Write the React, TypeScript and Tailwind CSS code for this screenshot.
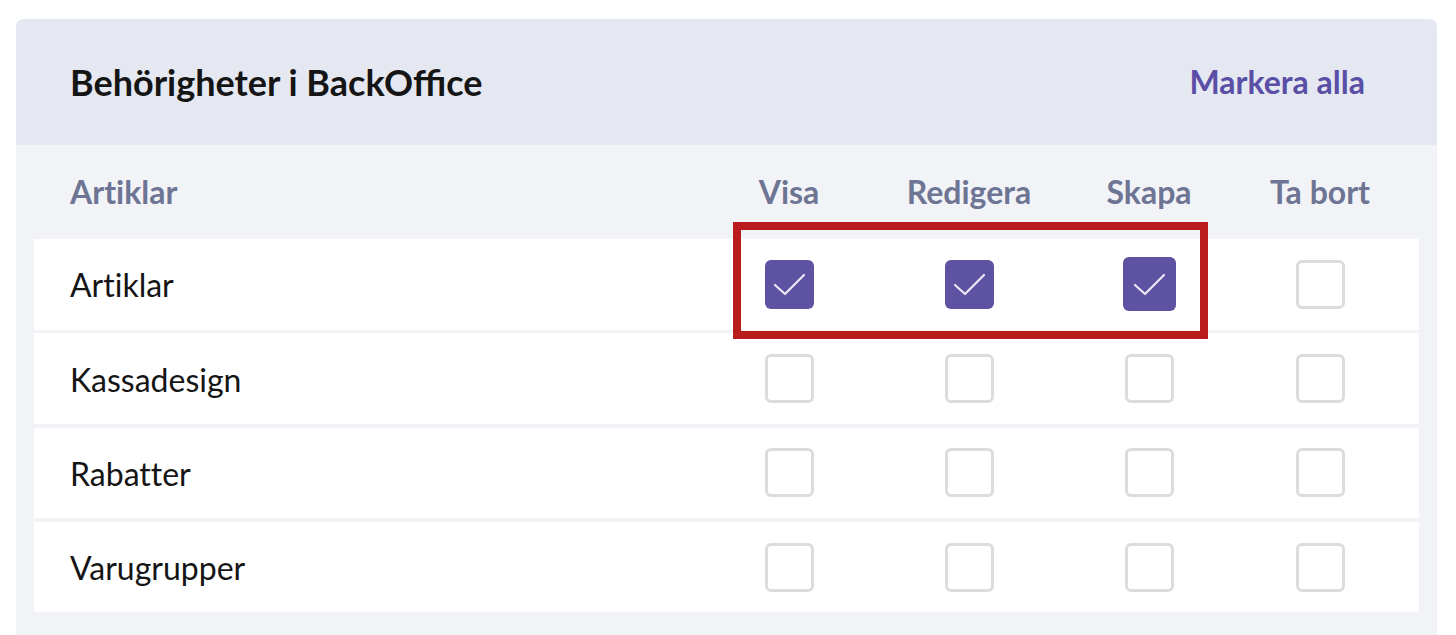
import React from "react";

const rows = [
  { name: "Artiklar", checks: [true, true, true, false] },
  { name: "Kassadesign", checks: [false, false, false, false] },
  { name: "Rabatter", checks: [false, false, false, false] },
  { name: "Varugrupper", checks: [false, false, false, false] },
];

const cols = ["Visa", "Redigera", "Skapa", "Ta bort"];

function Box({ checked, big }: { checked: boolean; big?: boolean }) {
  if (checked) {
    return (
      <div
        className={`${big ? "w-[53px] h-[54px]" : "w-[49px] h-[49px]"} rounded-[6px] bg-[#5e52a3] flex items-center justify-center`}
      >
        <svg width="48" height="48" viewBox="0 0 48 48" fill="none">
          <polyline
            points="10,25 20,34 39,15"
            stroke="#ece9f7"
            strokeWidth="2.2"
            strokeLinecap="round"
            strokeLinejoin="round"
          />
        </svg>
      </div>
    );
  }
  return <div className="w-[49px] h-[49px] rounded-[6px] border-[3px] border-[#dcdcdc] bg-white" />;
}

export default function App() {
  return (
    <div className="w-[1456px] h-[635px] bg-white pt-[19px] pl-[16px] overflow-hidden font-['Lato',sans-serif]">
      <div className="w-[1421px] rounded-t-[7px] overflow-hidden">
        {/* header */}
        <div className="h-[126px] bg-[#e5e8f1] flex items-center justify-between pl-[54px] pr-[72px]">
          <div className="text-[36px] font-bold text-[#151515]">Behörigheter i BackOffice</div>
          <div className="text-[32px] font-bold text-[#5a4ea6]">Markera alla</div>
        </div>

        {/* body */}
        <div className="bg-[#f2f3f7] px-[18px] pb-[30px] [font-variant-ligatures:none]">
          <div className="h-[94px] grid grid-cols-[1fr_180px_180px_180px_162px] items-center pl-[36px] pr-[18px] pb-[1px]">
            <div className="text-[32px] font-bold text-[#6e7594]">Artiklar</div>
            {cols.map((c) => (
              <div key={c} className="text-[32px] font-bold text-[#6e7594] text-center">
                {c}
              </div>
            ))}
          </div>

          <div className="relative flex flex-col gap-[3.8px]">
            {rows.map((r) => (
              <div
                key={r.name}
                className="h-[90.5px] bg-white grid grid-cols-[1fr_180px_180px_180px_162px] items-center pl-[36px] pr-[18px]"
              >
                <div className="text-[32px] text-[#151515] pt-[2px]">{r.name}</div>
                {r.checks.map((ch, i) => (
                  <div key={i} className="flex justify-center">
                    <Box checked={ch} big={r.name === "Artiklar" && i === 2} />
                  </div>
                ))}
              </div>
            ))}
            {/* highlight marker */}
            <div className="absolute left-[699px] top-[-17px] w-[475px] h-[117px] border-[8px] border-[#b91c1c] pointer-events-none" />
          </div>
        </div>
      </div>
    </div>
  );
}
